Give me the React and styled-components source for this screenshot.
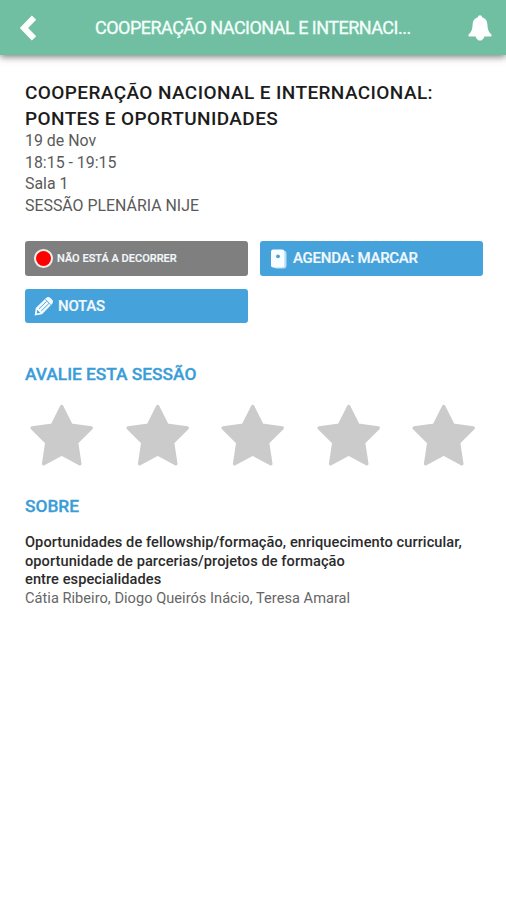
import React from "react";
import styled, {createGlobalStyle} from "styled-components";

const GlobalStyle = createGlobalStyle`
    * {
        box-sizing: border-box;
    }
    body {
        margin: 0;
        background: #fff;
        font-family: Roboto, "Liberation Sans", sans-serif;
    }
`

const Page = styled.div`
    width: 100%;
    min-height: 900px;
    background: #fff;
`

const TopBar = styled.header`
    display: flex;
    align-items: center;
    justify-content: space-between;
    height: 55px;
    padding: 0 14px 0 19px;
    background: #70bfa3;
    box-shadow: 0 2px 7px rgba(0, 0, 0, 0.5);
`

const TopTitle = styled.h1`
    width: 320px;
    margin: 0 0 0 5px;
    font-size: 18px;
    font-weight: 400;
    line-height: 55px;
    letter-spacing: -0.52px;
    white-space: nowrap;
    color: #f4fffb;
    -webkit-text-stroke: 0.3px #f4fffb;
`

const IconButton = styled.button`
    display: flex;
    padding: 0;
    border: 0;
    background: none;
`

const Content = styled.main`
    padding: 25px 24px 0 25px;
`

const SessionTitle = styled.h2`
    margin: 0;
    font-size: 19px;
    font-weight: 500;
    line-height: 26px;
    letter-spacing: 0.4px;
    color: #1c1c1c;
`

const Line = styled.div`
    white-space: nowrap;
`

const Details = styled.div`
    margin-top: -2px;
    font-size: 15.9px;
    line-height: 21.5px;
    color: #5a5a5a;
`

const Actions = styled.div`
    display: grid;
    grid-template-columns: 223px 223px;
    grid-template-rows: 35px 34px;
    gap: 13px 12px;
    margin-top: 25px;
`

const Action = styled.button`
    display: flex;
    align-items: center;
    gap: 4px;
    padding: 0 0 1px 9px;
    border: 0;
    border-radius: 3px;
    background: ${props => props.$color || '#45a2da'};
    font-family: inherit;
    font-size: ${props => props.$size || '15px'};
    font-weight: 500;
    letter-spacing: ${props => props.$spacing || '-0.25px'};
    white-space: nowrap;
    color: #f1f8fd;
    -webkit-text-stroke: 0.2px #f1f8fd;
`

const RecordDot = styled.span`
    width: 19px;
    height: 19px;
    border: 2px solid #f3eeee;
    border-radius: 50%;
    background: #fe0000;
`

const SectionTitle = styled.h3`
    margin: ${props => props.$top} 0 0;
    font-size: 17.4px;
    font-weight: 500;
    line-height: 22px;
    letter-spacing: -0.05px;
    color: #3b9dd7;
    -webkit-text-stroke: 0.3px #3b9dd7;
`

const Stars = styled.div`
    display: flex;
    justify-content: space-between;
    margin: 19px 6px 0 5px;
`

const About = styled.div`
    margin-top: 16px;
    font-size: 14.6px;
    line-height: 18.6px;
    letter-spacing: 0.03px;
    color: #666;
`

const Strong = styled.div`
    font-weight: 500;
    letter-spacing: 0.07px;
    color: #2b2b2b;
`

const BackIcon = () => (
    <svg width="18" height="26" viewBox="0 0 18 26">
        <path d="M15 2.6 L5 13 L15 23.4" fill="none" stroke="#fff" strokeWidth="6"/>
    </svg>
)

const BellIcon = () => (
    <svg width="24" height="26" viewBox="0 0 24 26">
        <path
            d="M12 0.3 C13.2 0.3 14 1.1 14.1 2.3 C17.4 3.2 19.3 5.9 19.4 9.5 C19.5 14 20.5 17 23.2 19.2 C24 20 23.6 21.4 22.5 21.4 H16.4 C15.6 23.8 13.8 25.6 12 25.6 S8.4 23.8 7.6 21.4 H1.5 C0.4 21.4 0 20 0.8 19.2 C3.5 17 4.5 14 4.6 9.5 C4.7 5.9 6.6 3.2 9.9 2.3 C10 1.1 10.8 0.3 12 0.3 Z"
            fill="#fff"/>
    </svg>
)

const AgendaIcon = () => (
    <svg width="20" height="21" viewBox="0 0 20 21">
        <rect x="4.5" y="2.5" width="13" height="18" rx="3" fill="#b9def5"/>
        <rect x="2" y="1.6" width="13.3" height="17.8" rx="2.2" fill="#fafdff"/>
        <circle cx="9" cy="8.3" r="1.9" fill="#45a2da"/>
    </svg>
)

const PencilIcon = () => (
    <svg width="20" height="20" viewBox="0 0 20 20">
        <path
            d="M0.6 19.4 L1.8 12 L12 2 C13.5 0.6 15 0.6 16.4 2 L18 3.6 C19.4 5 19.4 6.5 18 8 L8 18.2 Z"
            fill="#f3faff"/>
        <path d="M5 12.8 L12.6 5.4 M7.2 15 L14.8 7.6 M11.2 3.4 L16.6 8.8"
              fill="none" stroke="#45a2da" strokeWidth="0.9"/>
        <path d="M3.2 13.8 L6.2 16.8 L2.9 17.4 Z" fill="#45a2da"/>
    </svg>
)

const StarIcon = () => (
    <svg width="64" height="63" viewBox="0 0 64 63">
        <path
            d="M31.7 2.6 L41.1 21.2 L61.2 24 L46.6 38.6 L49.8 59.8 L31.7 50.1 L13.6 59.8 L16.8 38.6 L2.2 24 L22.3 21.2 Z"
            fill="#cbcbcb" stroke="#cbcbcb" strokeWidth="3.4" strokeLinejoin="round"/>
    </svg>
)

const App = () => (
    <Page>
        <GlobalStyle/>
        <TopBar>
            <IconButton aria-label="Voltar"><BackIcon/></IconButton>
            <TopTitle>COOPERAÇÃO NACIONAL E INTERNACI...</TopTitle>
            <IconButton aria-label="Notificações"><BellIcon/></IconButton>
        </TopBar>
        <Content>
            <SessionTitle>
                <Line>COOPERAÇÃO NACIONAL E INTERNACIONAL:</Line>
                <Line>PONTES E OPORTUNIDADES</Line>
            </SessionTitle>
            <Details>
                <Line>19 de Nov</Line>
                <Line>18:15 - 19:15</Line>
                <Line>Sala 1</Line>
                <Line>SESSÃO PLENÁRIA NIJE</Line>
            </Details>
            <Actions>
                <Action $color="#7f7f7f" $size="11px" $spacing="0px">
                    <RecordDot/>
                    NÃO ESTÁ A DECORRER
                </Action>
                <Action>
                    <AgendaIcon/>
                    AGENDA: MARCAR
                </Action>
                <Action>
                    <PencilIcon/>
                    NOTAS
                </Action>
            </Actions>
            <SectionTitle $top="40px">AVALIE ESTA SESSÃO</SectionTitle>
            <Stars>
                {[1, 2, 3, 4, 5].map(n => <StarIcon key={n}/>)}
            </Stars>
            <SectionTitle $top="28px">SOBRE</SectionTitle>
            <About>
                <Strong>
                    <Line>Oportunidades de fellowship/formação, enriquecimento curricular,</Line>
                    <Line>oportunidade de parcerias/projetos de formação</Line>
                    <Line>entre especialidades</Line>
                </Strong>
                <Line>Cátia Ribeiro, Diogo Queirós Inácio, Teresa Amaral</Line>
            </About>
        </Content>
    </Page>
)

export default App
